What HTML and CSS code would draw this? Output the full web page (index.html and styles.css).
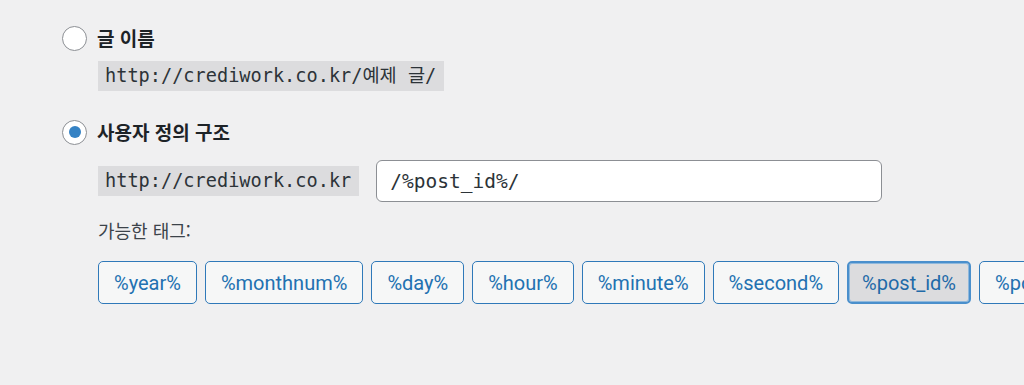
FILE: index.html
```html
<!DOCTYPE html>
<html lang="ko">
<head>
<meta charset="utf-8">
<link rel="stylesheet" href="styles.css">
</head>
<body>
<div class="page">
  <div class="option">
    <label class="choice">
      <input type="radio" name="permalink" class="radio">
      <span class="choice-label">글 이름</span>
    </label>
    <div class="detail first">
      <code class="url">http://crediwork.co.kr/예제 글/</code>
    </div>
  </div>

  <div class="option second">
    <label class="choice">
      <input type="radio" name="permalink" class="radio" checked>
      <span class="choice-label">사용자 정의 구조</span>
    </label>
    <div class="detail custom">
      <code class="url">http://crediwork.co.kr</code>
      <input type="text" class="structure" value="/%post_id%/">
    </div>
    <div class="detail tags-block">
      <p class="tags-title">가능한 태그:</p>
      <ul class="tags">
        <li><button class="tag">%year%</button></li>
        <li><button class="tag">%monthnum%</button></li>
        <li><button class="tag">%day%</button></li>
        <li><button class="tag">%hour%</button></li>
        <li><button class="tag">%minute%</button></li>
        <li><button class="tag">%second%</button></li>
        <li><button class="tag active">%post_id%</button></li>
        <li><button class="tag">%postname%</button></li>
      </ul>
    </div>
  </div>
</div>
</body>
</html>
```

FILE: styles.css
```css
html, body {
  margin: 0;
  padding: 0;
  background: #f0f0f1;
  overflow: hidden;
}

body {
  width: 1024px;
  height: 385px;
  font-family: Roboto, "Noto Sans CJK KR", sans-serif;
  color: #3c434a;
}

.page {
  padding: 26px 0 0 62px;
}

.option {
  display: flex;
  flex-direction: column;
}

.option.second {
  margin-top: 29px;
}

.choice {
  display: flex;
  align-items: center;
  gap: 10px;
  height: 24px;
}

.radio {
  appearance: none;
  -webkit-appearance: none;
  margin: 0;
  width: 25px;
  height: 25px;
  border: 1px solid #8c8f94;
  border-radius: 50%;
  background: #fff;
  box-sizing: border-box;
  display: flex;
  align-items: center;
  justify-content: center;
  flex: none;
}

.radio:checked::before {
  content: "";
  width: 12px;
  height: 12px;
  border-radius: 50%;
  background: #3582c4;
}

.choice-label {
  font-family: "Noto Sans CJK KR", sans-serif;
  font-weight: 700;
  font-size: 19px;
  color: #1d2327;
  line-height: 24px;
}

.detail {
  padding-left: 36px;
}

.detail.first {
  margin-top: 11px;
}

.url {
  display: inline-block;
  font-family: "DejaVu Sans Mono", "Noto Sans CJK KR", monospace;
  font-size: 18.6px;
  line-height: 30px;
  height: 30px;
  padding: 0 8px 0 7px;
  background: #dcdcde;
  color: #2c3338;
}

.detail.custom {
  margin-top: 16px;
  display: flex;
  align-items: center;
  gap: 17px;
}

.structure {
  box-sizing: border-box;
  width: 506px;
  height: 42px;
  border: 1px solid #8c8f94;
  border-radius: 6px;
  background: #fff;
  padding: 0 13px;
  font-family: "DejaVu Sans Mono", monospace;
  font-size: 19.5px;
  color: #2c3338;
  outline: none;
}

.tags-block {
  margin-top: 14px;
}

.tags-title {
  margin: 0;
  font-family: "Noto Sans CJK KR", sans-serif;
  font-size: 18px;
  line-height: 28px;
  color: #3c434a;
}

.tags {
  list-style: none;
  margin: 17px 0 0;
  padding: 0;
  display: flex;
  flex-wrap: nowrap;
  gap: 8px;
}

.tags li {
  flex: none;
}

.tag {
  box-sizing: border-box;
  height: 43px;
  padding: 0 15px;
  border: 1px solid #2f79b9;
  border-radius: 5px;
  background: #f6f7f7;
  color: #2271b1;
  font-family: Roboto, sans-serif;
  font-size: 20px;
  white-space: nowrap;
  cursor: pointer;
}

.tag.active {
  padding: 0 13px;
  background: #dcdcde;
  border: 2px solid #4a8fcc;
  box-shadow: inset 0 0 0 1px #8fb8dc;
  color: #1f6aa8;
}
```
